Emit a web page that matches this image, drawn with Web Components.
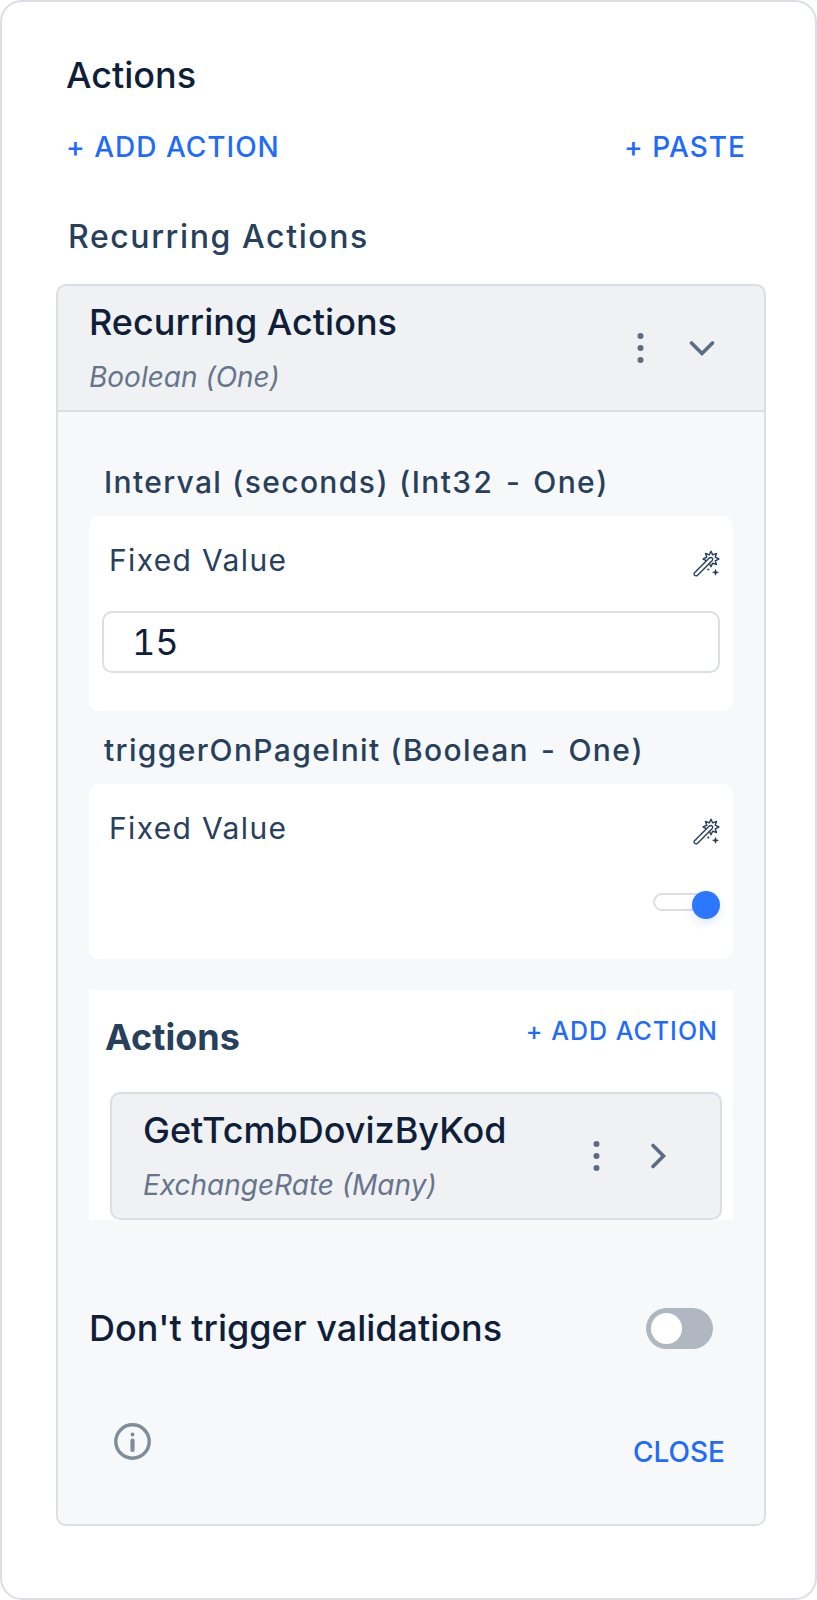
<!DOCTYPE html>
<html lang="en">
<head>
<meta charset="utf-8">
<meta name="viewport" content="width=device-width, initial-scale=1">
<title>Actions</title>
<style>
  :root {
    --ink: #0f1f3a;
    --label: #27405c;
    --muted: #66758d;
    --icon: #5b6b84;
    --blue: #1f6bff;
    --line: #dcdee5;
    --head: #f0f1f3;
    --body: #f7f8fa;
  }
  html { background: #fff; }
  body {
    margin: 0;
    font-family: Inter, "Liberation Sans", sans-serif;
    color: var(--ink);
  }
</style>
</head>
<body>
<action-panel></action-panel>

<template id="t-action-panel">
  <style>
    :host {
      display: block;
      box-sizing: border-box;
      min-height: 100vh;
      padding: 51px 49px 72px 54px;
      border: 2px solid var(--line);
      border-radius: 22px;
      background: #fff;
    }
    header { padding: 0 20px 0 10px; }
    h1, h2 { margin: 0; font-weight: 500; }
    h1 { font-size: 36px; line-height: 44px; }
    .links { display: flex; justify-content: space-between; margin-top: 30px; }
    h2 {
      margin: 50px 0 27px 12px;
      font-size: 32px;
      line-height: 40px;
      letter-spacing: 0.05em;
      color: var(--label);
    }
    .nested { margin-top: 31px; padding-top: 23px; background: #fff; }
    .nested-head {
      display: flex;
      justify-content: space-between;
      align-items: flex-start;
      padding: 0 15px 0 16px;
      margin-bottom: 33px;
    }
    h3 {
      margin: 0;
      padding-top: 2px;
      font-size: 36px;
      line-height: 44px;
      font-weight: 700;
      color: var(--label);
    }
    .nested action-card { margin: 0 11px 0 21px; }
    .validation { margin-top: 86px; }
    footer {
      display: flex;
      justify-content: space-between;
      align-items: flex-start;
      margin-top: 73px;
      padding: 0 8px 0 25px;
    }
    footer text-button { padding-top: 9px; }
  </style>
  <header>
    <h1>Actions</h1>
    <div class="links">
      <text-button>+ ADD ACTION</text-button>
      <text-button>+ PASTE</text-button>
    </div>
  </header>
  <h2>Recurring Actions</h2>
  <action-card open>
    <span slot="title">Recurring Actions</span>
    <span slot="type">Boolean (One)</span>
    <param-field name="Interval (seconds) (Int32 - One)">
      <number-box value="15" label="Interval (seconds)"></number-box>
    </param-field>
    <param-field name="triggerOnPageInit (Boolean - One)">
      <slim-toggle label="triggerOnPageInit"></slim-toggle>
    </param-field>
    <section class="nested">
      <div class="nested-head">
        <h3>Actions</h3>
        <text-button small>+ ADD ACTION</text-button>
      </div>
      <action-card>
        <span slot="title">GetTcmbDovizByKod</span>
        <span slot="type">ExchangeRate (Many)</span>
      </action-card>
    </section>
    <switch-row class="validation">Don't trigger validations</switch-row>
    <footer>
      <info-button></info-button>
      <text-button plain>CLOSE</text-button>
    </footer>
  </action-card>
</template>

<template id="t-text-button">
  <style>
    :host { display: block; flex: none; }
    button {
      display: block;
      margin: 0;
      padding: 0;
      border: 0;
      background: none;
      font: 500 28px/40px Inter, "Liberation Sans", sans-serif;
      letter-spacing: 1px;
      color: var(--blue);
      white-space: nowrap;
      cursor: pointer;
    }
    :host([small]) button { font-size: 25px; line-height: 36px; }
    :host([plain]) button { letter-spacing: 0; }
  </style>
  <button type="button"><slot></slot></button>
</template>

<template id="t-action-card">
  <style>
    :host {
      display: block;
      border: 2px solid var(--line);
      border-radius: 10px;
      background: var(--head);
      overflow: hidden;
    }
    .head {
      display: flex;
      align-items: center;
      justify-content: space-between;
      padding: 0 42px 0 31px;
    }
    .names { padding: 14px 0 15px; min-width: 0; }
    .title { font-size: 36px; line-height: 44px; font-weight: 500; }
    .type {
      margin-top: 15px;
      font-size: 28px;
      line-height: 36px;
      font-style: italic;
      color: var(--muted);
    }
    .tools { display: flex; gap: 22px; flex: none; }
    button {
      display: block;
      width: 40px;
      height: 40px;
      margin: 0;
      padding: 0;
      border: 0;
      background: none;
      color: var(--icon);
      cursor: pointer;
    }
    svg { display: block; }
    :host([open]) .arrow svg { transform: rotate(90deg); }
    .body {
      display: none;
      padding: 31px 31px 52px;
      border-top: 2px solid var(--line);
      background: var(--body);
    }
    :host([open]) .body { display: block; }
  </style>
  <div class="head">
    <div class="names">
      <div class="title"><slot name="title"></slot></div>
      <div class="type"><slot name="type"></slot></div>
    </div>
    <div class="tools">
      <button type="button" aria-label="More">
        <svg width="40" height="40" viewBox="0 0 40 40" fill="currentColor"><circle cx="20.500" cy="8" r="3"/><circle cx="20.500" cy="20" r="3"/><circle cx="20.500" cy="32" r="3"/></svg>
      </button>
      <button type="button" class="arrow" aria-label="Expand or collapse">
        <svg width="40" height="40" viewBox="0 0 40 40" fill="none" stroke="currentColor" stroke-width="3.600" stroke-linecap="round"><path d="M15 9.500 25.500 20 15 30.500"/></svg>
      </button>
    </div>
  </div>
  <div class="body"><slot></slot></div>
</template>

<template id="t-param-field">
  <style>
    :host { display: block; padding-top: 19px; }
    .name {
      padding-left: 15px;
      margin-bottom: 14px;
      font-size: 30px;
      line-height: 40px;
      font-weight: 500;
      font-variant-numeric: tabular-nums;
      letter-spacing: 0.045em;
      color: var(--label);
    }
    .box { padding: 24px 13px 38px; border-radius: 10px; background: #fff; }
    .mode {
      display: flex;
      justify-content: space-between;
      align-items: center;
      margin-bottom: 31px;
      padding-left: 7px;
      font-size: 30px;
      line-height: 40px;
      letter-spacing: 0.045em;
      color: var(--label);
    }
    button {
      display: block;
      margin: 0;
      padding: 6px 0 0;
      border: 0;
      background: none;
      color: var(--label);
      cursor: pointer;
    }
    svg { display: block; }
  </style>
  <div class="name"></div>
  <div class="box">
    <div class="mode">
      <span>Fixed Value</span>
      <button type="button" aria-label="Use an expression">
        <svg width="27" height="27" viewBox="0 0 27 27" stroke="currentColor" stroke-width="1.400" stroke-linejoin="round" fill="none">
          <path d="M18 1.200 19.700 4.900 23.500 3.500 22.200 7.200 25.900 9 22.200 10.800 23.500 14.500 19.700 13.100 18 16.800 16.300 13.100 12.500 14.500 13.800 10.800 10.100 9 13.800 7.200 12.500 3.500 16.300 4.900Z"/>
          <path fill="#fff" d="M16 8.200Q18.200 6.800 19.200 8Q20.300 9.200 18.800 11L4.600 25.200Q3 26.500 1.700 25.300Q.5 24 1.800 22.400Z"/>
          <path fill="currentColor" stroke-width=".4" d="M22.500 19.200 23.400 21.500 25.600 22.300 23.400 23.200 22.500 25.400 21.600 23.200 19.400 22.300 21.600 21.500Z"/>
          <circle cx="15.300" cy="19.500" r="1.100" fill="currentColor" stroke="none"/>
        </svg>
      </button>
    </div>
    <slot></slot>
  </div>
</template>

<template id="t-number-box">
  <style>
    :host { display: block; }
    input {
      display: block;
      box-sizing: border-box;
      width: 100%;
      height: 62px;
      margin: 0;
      padding: 0 28px;
      border: 2px solid var(--line);
      border-radius: 10px;
      background: #fff;
      font: 400 36px/44px Inter, "Liberation Sans", sans-serif;
      font-variant-numeric: tabular-nums;
      color: var(--ink);
      outline: 0;
    }
  </style>
  <input type="text" inputmode="numeric">
</template>

<template id="t-slim-toggle">
  <style>
    :host { display: flex; justify-content: flex-end; padding: 12px 0 2px; }
    input {
      appearance: none;
      display: flex;
      align-items: flex-start;
      justify-content: flex-end;
      width: 67px;
      height: 28px;
      margin: 0;
      cursor: pointer;
    }
    input::before {
      content: "";
      box-sizing: border-box;
      flex: 1;
      height: 18px;
      margin-top: 2px;
      border: 2px solid var(--line);
      border-radius: 9px;
      background: #fff;
    }
    input::after {
      content: "";
      flex: none;
      width: 28px;
      height: 28px;
      margin-left: -14px;
      border-radius: 50%;
      background: #2b77ff;
      box-shadow: 0 4px 8px #2b5bff22;
    }
    input:not(:checked)::after { order: -1; margin: 0 -14px 0 0; background: #b1b7c1; }
  </style>
  <input type="checkbox" role="switch" checked>
</template>

<template id="t-switch-row">
  <style>
    :host { display: block; }
    label {
      display: flex;
      justify-content: space-between;
      align-items: center;
      padding-right: 20px;
      font-size: 36px;
      line-height: 44px;
      font-weight: 500;
    }
    input {
      appearance: none;
      display: flex;
      align-items: center;
      box-sizing: border-box;
      flex: none;
      width: 67px;
      height: 41px;
      margin: 0;
      padding: 5px;
      border-radius: 21px;
      background: #b1b7c1;
      cursor: pointer;
    }
    input::before {
      content: "";
      width: 31px;
      height: 31px;
      border-radius: 50%;
      background: #fff;
    }
    input:checked { justify-content: flex-end; background: var(--blue); }
  </style>
  <label for="s"><span><slot></slot></span><input id="s" type="checkbox" role="switch"></label>
</template>

<template id="t-info-button">
  <style>
    :host { display: block; }
    button { display: block; margin: 0; padding: 0; border: 0; background: none; color: #7f8c9a; cursor: pointer; }
    svg { display: block; }
  </style>
  <button type="button" aria-label="Information">
    <svg width="37" height="37" viewBox="0 0 37 37" fill="none" stroke="currentColor"><circle cx="18.500" cy="18.500" r="16.700" stroke-width="3.400"/><path d="M18.500 17.500V27" stroke-width="4.200" stroke-linecap="round"/><circle cx="18.500" cy="11.500" r="1.900" fill="currentColor" stroke="none"/></svg>
  </button>
</template>

<script>
  class Part extends HTMLElement {
    connectedCallback() {
      if (this.shadowRoot) return;
      const root = this.attachShadow({ mode: 'open' });
      root.append(document.getElementById('t-' + this.localName).content.cloneNode(true));
      this.ready(root);
    }
    ready() {}
  }

  customElements.define('text-button', class extends Part {});
  customElements.define('info-button', class extends Part {});
  customElements.define('switch-row', class extends Part {});

  customElements.define('action-card', class extends Part {
    ready(root) {
      root.querySelector('.arrow').addEventListener('click', () => this.toggleAttribute('open'));
    }
  });

  customElements.define('param-field', class extends Part {
    ready(root) {
      root.querySelector('.name').textContent = this.getAttribute('name');
    }
  });

  customElements.define('number-box', class extends Part {
    ready(root) {
      const input = root.querySelector('input');
      input.value = this.getAttribute('value');
      input.setAttribute('aria-label', this.getAttribute('label'));
    }
  });

  customElements.define('slim-toggle', class extends Part {
    ready(root) {
      root.querySelector('input').setAttribute('aria-label', this.getAttribute('label'));
    }
  });

  customElements.define('action-panel', class extends Part {});
</script>
</body>
</html>
